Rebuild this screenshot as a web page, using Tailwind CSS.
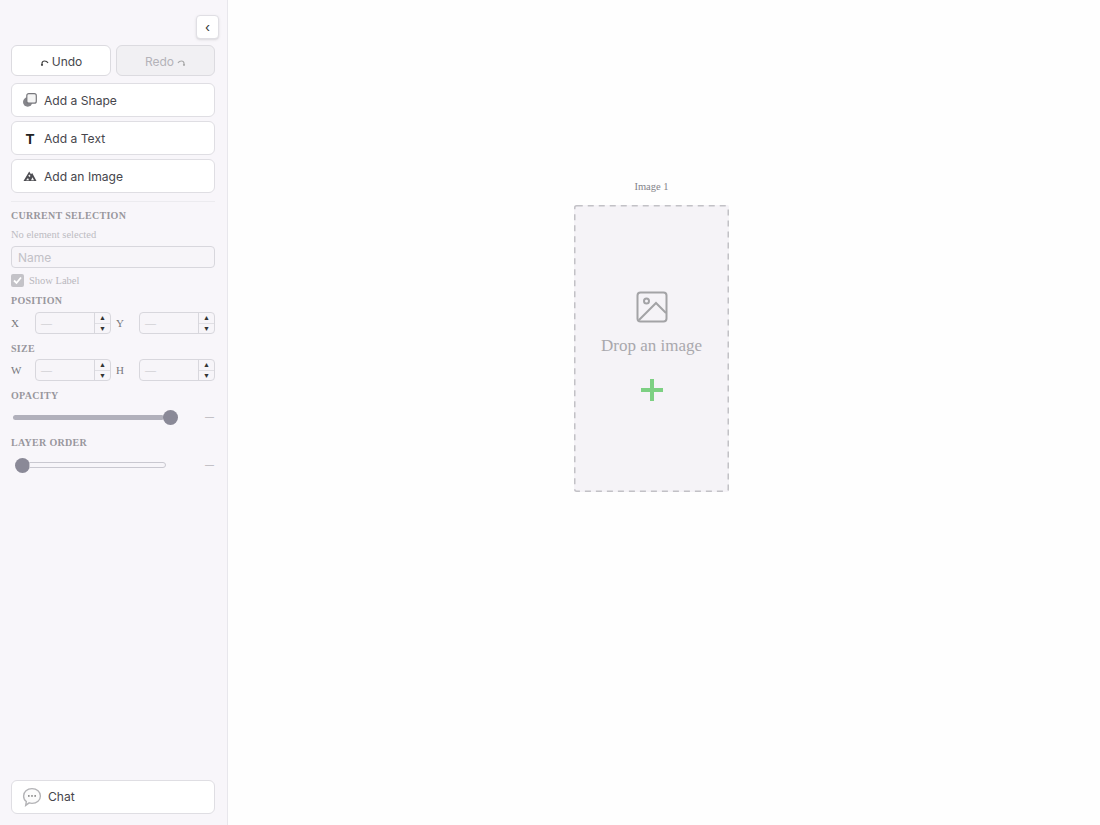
<!DOCTYPE html>
<html lang="en">
<head>
  <meta charset="UTF-8" />
  <title>Canvas editor</title>
  <script src="https://cdn.jsdelivr.net/npm/@tailwindcss/browser@4"></script>
</head>
<body class="h-[825px] w-[1100px] overflow-hidden bg-[#fefefe] font-['Liberation_Serif',serif]">
  <div class="flex h-full">
    <!-- sidebar -->
    <aside class="flex h-full w-[228px] shrink-0 flex-col border-r border-[#e8e7ec] bg-[#f8f6fa] pl-[11px] pr-[11px] pt-[15px] pb-[11px]">
      <div class="-mr-[3px] flex justify-end">
        <button class="flex h-[24px] w-[23px] items-center justify-center rounded-[4px] border border-[#e0dfe4] bg-white text-[13px] leading-none text-[#333] font-['Inter',sans-serif] shadow-sm">‹</button>
      </div>

      <div class="mt-[6px] flex gap-[5px] pr-[1px] font-['Inter',sans-serif] text-[12px]">
        <button class="flex h-[31px] w-[100px] items-center justify-center gap-[3px] rounded-[6px] border border-[#dcdbe0] bg-white pt-[2px] text-[#46464c]">
          <svg class="mt-[3px]" width="9" height="8" viewBox="0 0 9 8" fill="none" stroke="#444" stroke-width="1.2"><path d="M2 7V4.500C2 3 3 2 4.500 2S7.500 3 8 4"/><path d="M.8 5h2.400L2 7z" fill="#444" stroke="none"/></svg>
          Undo
        </button>
        <button class="flex h-[31px] w-[99px] items-center justify-center gap-[3px] rounded-[6px] border border-[#dcdbe0] bg-[#f1f0f3] pt-[2px] text-[#b4b3b9]">
          Redo
          <svg class="mt-[3px]" width="9" height="8" viewBox="0 0 9 8" fill="none" stroke="#aaa" stroke-width="1.2"><path d="M7 7V4.500C7 3 6 2 4.500 2S1.500 3 1 4"/><path d="M5.800 5h2.400L7 7z" fill="#aaa" stroke="none"/></svg>
        </button>
      </div>

      <div class="mt-[7px] flex flex-col gap-[4px] pr-[1px] font-['Inter',sans-serif] text-[12.1px] text-[#46464c]">
        <button class="flex h-[34px] items-center rounded-[6px] border border-[#dfdee3] bg-white pl-[11px] pt-[2px]">
          <svg class="mr-[7px] -mt-[2px]" width="14" height="14" viewBox="0 0 14 14"><circle cx="4.700" cy="9" r="4.700" fill="#85858a"/><rect x="3.800" y="0.700" width="9.500" height="9.500" rx="2" fill="#f4f4f4" stroke="#77777c" stroke-width="1.200"/></svg>
          Add a Shape
        </button>
        <button class="flex h-[34px] items-center rounded-[6px] border border-[#dfdee3] bg-white pl-[11px] pt-[2px]">
          <span class="mr-[7px] w-[14px] text-center font-['Liberation_Sans',sans-serif] text-[14px] font-bold text-[#222]">T</span>
          Add a Text
        </button>
        <button class="flex h-[34px] items-center rounded-[6px] border border-[#dfdee3] bg-white pl-[11px] pt-[2px]">
          <svg class="mr-[7px] -mt-[2px]" width="14" height="12" viewBox="0 0 14 12"><path d="M0.500 11 6.200 1.500 8 4.200 9.200 3 13.500 11z" fill="#4d4d52"/><path d="M5.200 5.800 6.500 4.500 7.500 6 6.500 7z M3 10.200l2-2.200 1 2.200z M8 10.200l1.500-3 1.500 3z" fill="#f5f5f5"/></svg>
          Add an Image
        </button>
      </div>

      <div class="mt-[8px] mr-[1px] h-px bg-[#ecebef]"></div>

      <div class="mt-[7px] pr-[1px]">
        <h3 class="text-[10px] leading-[13px] font-bold tracking-[0.3px] text-[#98979d]">CURRENT SELECTION</h3>
        <p class="mt-[6px] text-[10.5px] leading-[13px] text-[#bdbcc2]">No element selected</p>
        <input disabled placeholder="Name" class="mt-[5px] block h-[22px] w-full rounded-[4px] border border-[#d8d7dd] bg-[#f7f5f9] px-[6px] text-[12px] placeholder:text-[#c2c1c7] font-['Inter',sans-serif]" />

        <div class="mt-[6px] flex h-[13px] items-center gap-[5px]">
          <span class="flex h-[13px] w-[13px] items-center justify-center rounded-[2px] bg-[#c4c3c8]">
            <svg width="11" height="11" viewBox="0 0 11 11" fill="none" stroke="#fff" stroke-width="1.8"><path d="M2 5.500 4.500 8 9 2.500"/></svg>
          </span>
          <span class="text-[10.5px] text-[#b8b7bd]">Show Label</span>
        </div>

        <h3 class="mt-[7px] text-[10px] leading-[13px] font-bold tracking-[0.3px] text-[#98979d]">POSITION</h3>
        <div class="mt-[5px] flex h-[22px] items-center text-[11px] text-[#77767c]">
          <span class="w-[24px]">X</span>
          <div class="flex h-[22px] w-[76px] rounded-[4px] border border-[#d8d7dd] bg-[#f7f5f9]">
            <span class="flex-1 pl-[5px] leading-[20px] text-[#c4c3c8]">—</span>
            <div class="flex w-[16px] flex-col border-l border-[#d8d7dd] text-center text-[7px] leading-[10px] text-[#333]"><span class="flex-1 border-b border-[#e0dfe4]">▲</span><span class="flex-1">▼</span></div>
          </div>
          <span class="w-[28px] pl-[5px]">Y</span>
          <div class="flex h-[22px] w-[76px] rounded-[4px] border border-[#d8d7dd] bg-[#f7f5f9]">
            <span class="flex-1 pl-[5px] leading-[20px] text-[#c4c3c8]">—</span>
            <div class="flex w-[16px] flex-col border-l border-[#d8d7dd] text-center text-[7px] leading-[10px] text-[#333]"><span class="flex-1 border-b border-[#e0dfe4]">▲</span><span class="flex-1">▼</span></div>
          </div>
        </div>

        <h3 class="mt-[8px] text-[10px] leading-[13px] font-bold tracking-[0.3px] text-[#98979d]">SIZE</h3>
        <div class="mt-[4px] flex h-[22px] items-center text-[11px] text-[#77767c]">
          <span class="w-[24px]">W</span>
          <div class="flex h-[22px] w-[76px] rounded-[4px] border border-[#d8d7dd] bg-[#f7f5f9]">
            <span class="flex-1 pl-[5px] leading-[20px] text-[#c4c3c8]">—</span>
            <div class="flex w-[16px] flex-col border-l border-[#d8d7dd] text-center text-[7px] leading-[10px] text-[#333]"><span class="flex-1 border-b border-[#e0dfe4]">▲</span><span class="flex-1">▼</span></div>
          </div>
          <span class="w-[28px] pl-[5px]">H</span>
          <div class="flex h-[22px] w-[76px] rounded-[4px] border border-[#d8d7dd] bg-[#f7f5f9]">
            <span class="flex-1 pl-[5px] leading-[20px] text-[#c4c3c8]">—</span>
            <div class="flex w-[16px] flex-col border-l border-[#d8d7dd] text-center text-[7px] leading-[10px] text-[#333]"><span class="flex-1 border-b border-[#e0dfe4]">▲</span><span class="flex-1">▼</span></div>
          </div>
        </div>

        <h3 class="mt-[8px] text-[10px] leading-[13px] font-bold tracking-[0.3px] text-[#98979d]">OPACITY</h3>
        <div class="mt-[7px] flex h-[16px] items-center">
          <div class="flex w-[167px] items-center pl-[2px]">
            <div class="h-[5px] flex-1 rounded-full bg-[#b1b0bb]"></div>
            <div class="-ml-[1px] h-[15px] w-[15px] rounded-full bg-[#8a8997]"></div>
          </div>
          <span class="ml-auto pr-[1px] text-[9px] text-[#9a999f]">—</span>
        </div>

        <h3 class="mt-[11px] text-[10px] leading-[13px] font-bold tracking-[0.3px] text-[#98979d]">LAYER ORDER</h3>
        <div class="mt-[8px] flex h-[16px] items-center">
          <div class="flex w-[155px] items-center pl-[4px]">
            <div class="h-[15px] w-[15px] shrink-0 rounded-full bg-[#8a8997]"></div>
            <div class="-ml-[1px] h-[6px] flex-1 rounded-r-full border border-[#c9c8d0] bg-[#f7f5f9]"></div>
          </div>
          <span class="ml-auto pr-[1px] text-[9px] text-[#9a999f]">—</span>
        </div>
      </div>

      <button class="mt-auto mr-[1px] flex h-[34px] shrink-0 items-center rounded-[6px] border border-[#dfdee3] bg-white pl-[10px] font-['Inter',sans-serif] text-[12.1px] text-[#46464c]">
        <svg class="mr-[6px]" width="20" height="20" viewBox="0 0 19 19"><path d="M9.500 1.500c4.600 0 8 2.900 8 7s-3.400 7-8 7c-1 0-1.900-.1-2.700-.4L3.500 17.500l.6-3.700C2.400 12.500 1.500 10.700 1.500 8.500c0-4.100 3.400-7 8-7z" fill="#fbfbfb" stroke="#b3b3b6" stroke-width="1.300"/><circle cx="6.500" cy="8.500" r=".8" fill="#777"/><circle cx="9.500" cy="8.500" r=".8" fill="#777"/><circle cx="12.500" cy="8.500" r=".8" fill="#777"/></svg>
        Chat
      </button>
    </aside>

    <!-- canvas -->
    <main class="flex-1 pl-[346px] pt-[180px]">
      <div class="flex w-[155px] flex-col items-center">
        <span class="text-[10.5px] leading-[14px] text-[#85848a]">Image 1</span>
        <div class="relative mt-[11px] flex h-[287px] w-[155px] flex-col items-center rounded-[2px] bg-[#f5f3f7] pt-[86px]">
          <!-- dashed outline, css dashes come out too short -->
          <svg class="absolute inset-0" width="155" height="287" fill="none"><rect x="0.750" y="0.750" width="153.500" height="285.500" rx="2" stroke="#c2c1c6" stroke-width="1.500" stroke-dasharray="6 5"/></svg>
          <svg width="32" height="32" viewBox="0 0 32 32" fill="none" stroke="#a3a3a6" stroke-width="2"><rect x="1.500" y="1.500" width="29" height="29" rx="3"/><circle cx="10.500" cy="10" r="2.500"/><path d="M3 29 20 12 30 22"/></svg>
          <span class="mt-[12px] text-[17px] leading-[22px] text-[#a9a8ad]">Drop an image</span>
          <svg class="mt-[21px]" width="24" height="24" viewBox="0 0 24 24" fill="#7dd083"><rect x="10" y="1" width="4" height="22"/><rect x="1" y="10" width="22" height="4"/></svg>
        </div>
      </div>
    </main>
  </div>
</body>
</html>
